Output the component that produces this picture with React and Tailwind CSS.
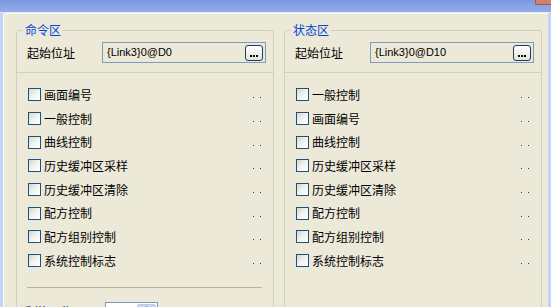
const leftItems = ["画面编号", "一般控制", "曲线控制", "历史缓冲区采样", "历史缓冲区清除", "配方控制", "配方组别控制", "系统控制标志"];
const rightItems = ["一般控制", "画面编号", "曲线控制", "历史缓冲区采样", "历史缓冲区清除", "配方控制", "配方组别控制", "系统控制标志"];

function Checkbox() {
  return (
    <div className="w-[13px] h-[13px] shrink-0 border border-[#1c5180] bg-gradient-to-br from-[#d6d6d0] via-[#f2f2ee] to-white" />
  );
}

function Row({ label }) {
  return (
    <div className="flex items-center h-[23.7px] pl-[11px] pr-[12px]">
      <Checkbox />
      <span className="ml-[3px] text-[12px] leading-[14px] text-black">{label}</span>
      <div className="ml-auto flex gap-[6px] relative top-[3px]">
        <span className="block w-px h-px bg-[#333]" />
        <span className="block w-px h-px bg-[#333]" />
      </div>
    </div>
  );
}

function Group({ title, addr, items, extra }) {
  return (
    <div className="relative w-[258px] h-[330px] shrink-0 border border-[#d0d0bf] rounded-[3px]">
      <div className="absolute left-[6px] top-[-8px] px-[2px] bg-[#ece9d8] text-[12px] leading-[14px] text-[#0046d5]">
        {title}
      </div>
      <div className="pt-[11px]">
        <div className="flex items-center h-[21px] pl-[10px]">
          <span className="w-[75px] text-[12px] leading-[14px] text-black">起始位址</span>
          <div className="w-[164px] h-[21px] border border-[#7f9db9] flex items-center pl-[4px]">
            <span className="font-['Liberation_Sans',sans-serif] text-[11px] leading-[13px] text-black">{addr}</span>
            <div className="ml-auto mr-[2px] w-[18px] h-[16px] rounded-[3px] border border-[#1d3a68] bg-gradient-to-b from-white to-[#e3e3db] flex items-end justify-center pb-[3px] gap-[1px]">
              <span className="block w-[2px] h-[2px] bg-black" />
              <span className="block w-[2px] h-[2px] bg-black" />
              <span className="block w-[2px] h-[2px] bg-black" />
            </div>
          </div>
        </div>
        <div className="mt-[9px] h-px bg-[#d0d0bf]" />
        <div className="pt-[10px]">
          {items.map((it) => (
            <Row key={it} label={it} />
          ))}
        </div>
        {extra && (
          <>
            <div className="mt-[14px] ml-[10px] mr-[11px] h-px bg-[#b5b2a2]" />
            <div className="mt-[14px] flex items-center h-[21px] pl-[3px]">
              <span className="w-[85px] text-[12px] leading-[14px] tracking-[2px] text-black">采样周期</span>
              <div className="w-[53px] h-[21px] border border-[#7f9db9] bg-white flex items-stretch">
                <span className="pl-[3px] pt-[2px] font-['Liberation_Sans',sans-serif] text-[11px] leading-[13px] text-black">200</span>
                <div className="ml-auto w-[19px] mt-[1px] mr-[1px] h-[9px] rounded-[2px] border border-[#b5c8f0] bg-[#c6d6fb] flex items-center justify-center">
                  <svg width="7" height="4" viewBox="0 0 7 4"><path d="M0 4 L3.5 0 L7 4 Z" fill="#4d6185" /></svg>
                </div>
              </div>
              <span className="ml-[5px] font-['Liberation_Sans',sans-serif] text-[12px] leading-[14px] text-black">( ms )</span>
            </div>
          </>
        )}
      </div>
    </div>
  );
}

export default function App() {
  return (
    <div className="w-[551px] h-[307px] overflow-hidden bg-[#c4d3f6] flex flex-col font-['Noto_Sans_CJK_SC','Noto_Sans',sans-serif]">
      <div className="relative h-[12px] shrink-0 bg-gradient-to-b from-[#7b99df] to-[#94ade9]">
        <div className="absolute right-0 top-0 w-[16px] h-[5px] bg-[#d0806f] rounded-bl-[2px] border-l border-b border-[#9c5a4e]" />
      </div>
      <div className="h-px shrink-0 bg-[#e4eaf9]" />
      <div className="flex flex-1 min-h-0">
        <div className="w-[3px] shrink-0 bg-[#c4d3f6]" />
        <div className="w-[545px] shrink-0 bg-[#ece9d8] rounded-tl-[3px] border-l border-t border-[#fbfbf8] flex items-start pt-[16px] pl-[12px] gap-[10px]">
          <Group title="命令区" addr="{Link3}0@D0" items={leftItems} extra />
          <Group title="状态区" addr="{Link3}0@D10" items={rightItems} />
        </div>
        <div className="flex-1 bg-[#c4d3f6]" />
      </div>
    </div>
  );
}
